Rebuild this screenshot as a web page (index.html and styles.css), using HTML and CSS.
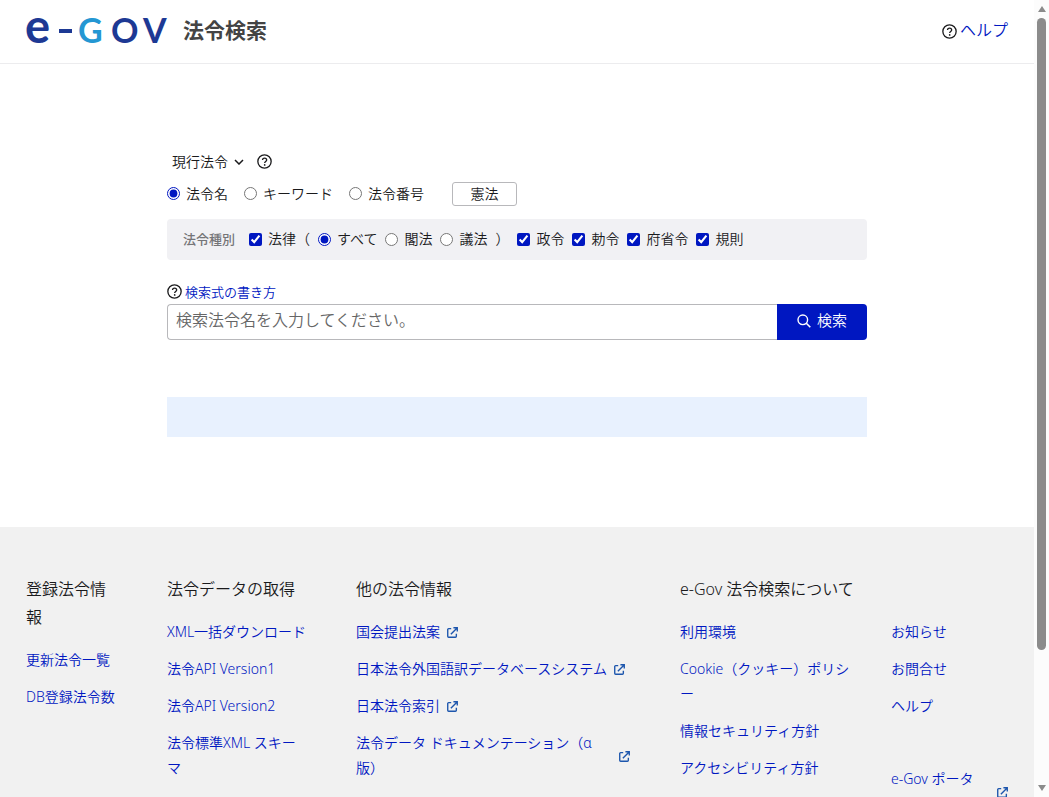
FILE: index.html
```html
<!DOCTYPE html>
<html lang="ja">
<head>
    <meta charset="UTF-8">
    <meta name="viewport" content="width=device-width, initial-scale=1.0">
    <title>e-Gov 法令検索</title>
    <link rel="stylesheet" href="styles.css">
</head>
<body>
    <!-- Shared icons -->
    <svg class="sprite" aria-hidden="true">
        <symbol id="icon-help" viewBox="0 0 16 16">
            <circle cx="8" cy="8" r="7.1" fill="none" stroke="currentColor" stroke-width="1.4"/>
            <path d="M5.9 6.5c0-1.3.9-2.2 2.2-2.2s2.2.8 2.2 2c0 1.7-2.1 1.8-2.1 3.4" fill="none" stroke="currentColor" stroke-width="1.4"/>
            <circle cx="8.2" cy="11.6" r=".9" fill="currentColor"/>
        </symbol>
        <symbol id="icon-external" viewBox="0 0 12 12">
            <path d="M4.6 1.8H1.8a1 1 0 0 0-1 1v7.4a1 1 0 0 0 1 1h7.4a1 1 0 0 0 1-1V7.4M7 .8h4.2V5M11 1 4.2 7.8" fill="none" stroke="currentColor" stroke-width="1.5"/>
        </symbol>
    </svg>

    <div class="page">
        <header class="header">
            <a class="brand" href="#">
                <svg class="logo" viewBox="0 0 144 52" role="img" aria-label="e-Gov">
                    <text y="39"><tspan class="logo-e" x="-1">e</tspan><tspan class="logo-g" x="52">G</tspan><tspan x="85">O</tspan><tspan x="117">V</tspan></text>
                    <rect x="33" y="25" width="13" height="4"/>
                </svg>
                <span class="brand-name">法令検索</span>
            </a>
            <a class="help-link" href="#"><svg class="icon-help"><use href="#icon-help"/></svg>ヘルプ</a>
        </header>

        <main class="search">
            <div class="row">
                <div class="law-select">
                    <select aria-label="法令の範囲">
                        <option>現行法令</option>
                    </select>
                    <svg class="chevron" viewBox="0 0 10 6"><path d="M1 1l4 4 4-4" fill="none" stroke="currentColor" stroke-width="1.5"/></svg>
                </div>
                <svg class="icon-help"><use href="#icon-help"/></svg>
            </div>

            <div class="row targets">
                <label><input type="radio" name="target" checked>法令名</label>
                <label><input type="radio" name="target">キーワード</label>
                <label><input type="radio" name="target">法令番号</label>
                <button class="constitution" type="button">憲法</button>
            </div>

            <div class="types">
                <span class="types-title">法令種別</span>
                <div class="types-group">
                    <label><input type="checkbox" checked>法律</label>
                    <span>（</span>
                </div>
                <label><input type="radio" name="law" checked>すべて</label>
                <label><input type="radio" name="law">閣法</label>
                <label><input type="radio" name="law">議法</label>
                <span>）</span>
                <label><input type="checkbox" checked>政令</label>
                <label><input type="checkbox" checked>勅令</label>
                <label><input type="checkbox" checked>府省令</label>
                <label><input type="checkbox" checked>規則</label>
            </div>

            <a class="hint" href="#"><svg class="icon-help"><use href="#icon-help"/></svg>検索式の書き方</a>
            <form class="search-form">
                <input type="text" placeholder="検索法令名を入力してください。" aria-label="検索法令名">
                <button type="button">
                    <svg viewBox="0 0 14 14"><circle cx="5.8" cy="5.8" r="4.8" fill="none" stroke="currentColor" stroke-width="1.4"/><path d="M9.3 9.3l4 4" stroke="currentColor" stroke-width="1.6"/></svg>検索
                </button>
            </form>
            <div class="notice"></div>
        </main>

        <footer class="footer">
            <section class="narrow">
                <h2>登録法令情報</h2>
                <ul>
                    <li><a href="#">更新法令一覧</a></li>
                    <li><a href="#">DB登録法令数</a></li>
                </ul>
            </section>
            <section class="narrow">
                <h2>法令データの取得</h2>
                <ul>
                    <li><a href="#">XML一括ダウンロード</a></li>
                    <li><a href="#">法令API Version1</a></li>
                    <li><a href="#">法令API Version2</a></li>
                    <li><a href="#">法令標準XML スキーマ</a></li>
                </ul>
            </section>
            <section class="related">
                <h2>他の法令情報</h2>
                <ul>
                    <li><a class="external" href="#">国会提出法案<svg><use href="#icon-external"/></svg></a></li>
                    <li><a class="external" href="#">日本法令外国語訳データベースシステム<svg><use href="#icon-external"/></svg></a></li>
                    <li><a class="external" href="#">日本法令索引<svg><use href="#icon-external"/></svg></a></li>
                    <li><a class="external" href="#">法令データ ドキュメンテーション（α版）<svg><use href="#icon-external"/></svg></a></li>
                </ul>
            </section>
            <section>
                <h2>e-Gov 法令検索について</h2>
                <ul>
                    <li><a href="#">利用環境</a></li>
                    <li><a href="#">Cookie（クッキー）ポリシー</a></li>
                    <li><a href="#">情報セキュリティ方針</a></li>
                    <li><a href="#">アクセシビリティ方針</a></li>
                </ul>
            </section>
            <section class="untitled">
                <ul>
                    <li><a href="#">お知らせ</a></li>
                    <li><a href="#">お問合せ</a></li>
                    <li><a href="#">ヘルプ</a></li>
                </ul>
                <ul class="portal">
                    <li><a class="external" href="#">e-Gov ポータル<svg><use href="#icon-external"/></svg></a></li>
                </ul>
            </section>
        </footer>
    </div>

    <div class="scrollbar" aria-hidden="true">
        <svg viewBox="0 0 10 8"><path d="M5 1l4 6H1z"/></svg>
        <div class="scroll-track"><div class="scroll-thumb"></div></div>
        <svg viewBox="0 0 10 8"><path d="M5 7l4-6H1z"/></svg>
    </div>
</body>
</html>
```
FILE: styles.css
```css
* {
    box-sizing: border-box;
}
body {
    display: flex;
    height: 100vh;
    margin: 0;
    overflow: hidden;
    font-family: "Noto Sans", "Noto Sans CJK JP", sans-serif;
    font-size: 14px;
    font-weight: 350;
    line-height: 24px;
    color: #1a1a1c;
    background: #fff;
}
a {
    color: #0017c1;
    text-decoration: none;
}
button, input, select {
    font-family: inherit;
    font-weight: inherit;
    color: inherit;
}
ul {
    margin: 0;
    padding: 0;
    list-style: none;
}
.sprite {
    position: absolute;
    width: 0;
    height: 0;
}
.page {
    flex: 1;
    min-width: 0;
    overflow: hidden;
}
.icon-help {
    flex: none;
    width: 15px;
    height: 15px;
    color: #1a1a1c;
}

/* Header */
.header {
    display: flex;
    align-items: center;
    justify-content: space-between;
    height: 64px;
    padding: 0 26px 4px;
    border-bottom: 1px solid #ececee;
}
.brand {
    display: flex;
    align-items: center;
    gap: 13px;
}
.logo {
    width: 144px;
    height: 52px;
    overflow: visible;
    font-family: Lato, sans-serif;
    font-size: 34px;
    font-weight: 700;
    fill: #1d3994;
}
.logo-e {
    font-size: 47px;
}
.logo-g {
    fill: #2497d3;
}
.brand-name {
    font-size: 21px;
    font-weight: 700;
    color: #444;
}
.help-link {
    display: flex;
    align-items: center;
    gap: 3px;
    font-size: 16px;
}
.help-link svg {
    margin-top: 3px;
}

/* Search */
.search {
    max-width: 700px;
    margin: 0 auto;
    padding: 85px 0 90px;
}
.row {
    display: flex;
    align-items: center;
    gap: 9px;
    margin-bottom: 8px;
}
label {
    display: flex;
    align-items: center;
    gap: 6px;
}
input[type="radio"], input[type="checkbox"] {
    width: 13px;
    height: 13px;
    margin: 0;
    accent-color: #0017c1;
}
.law-select {
    position: relative;
}
.law-select select {
    height: 24px;
    padding: 0 20px 0 5px;
    border: 0;
    font-size: 14px;
    background: transparent;
    appearance: none;
}
.chevron {
    position: absolute;
    top: 10px;
    right: 4px;
    width: 10px;
    height: 6px;
    pointer-events: none;
}
.targets {
    gap: 16px;
    margin-bottom: 13px;
}
.constitution {
    width: 65px;
    height: 24px;
    margin-left: 12px;
    padding: 0;
    border: 1px solid #b8b8bb;
    border-radius: 3px;
    font-size: 14px;
    line-height: 20px;
    background: #fff;
}
.types {
    display: flex;
    align-items: center;
    gap: 8px;
    height: 41px;
    margin-bottom: 20px;
    padding: 0 16px;
    border-radius: 4px;
    background: #f1f1f4;
}
.types-title {
    margin-right: 6px;
    font-size: 13px;
    font-weight: 500;
    color: #757578;
}
.types-group {
    display: flex;
}
.hint {
    display: flex;
    align-items: center;
    gap: 3px;
    font-size: 13px;
}
.search-form {
    display: flex;
    height: 36px;
}
.search-form input {
    flex: 1;
    min-width: 0;
    padding: 0 8px 4px;
    border: 1px solid #b8b8bb;
    border-right: 0;
    border-radius: 4px 0 0 4px;
    font-size: 16px;
}
.search-form input::placeholder {
    color: #666;
}
.search-form button {
    display: flex;
    align-items: center;
    justify-content: center;
    gap: 6px;
    width: 90px;
    padding: 0 6px 4px;
    border: 0;
    border-radius: 0 4px 4px 0;
    font-size: 15px;
    color: #fff;
    background: #0017c1;
}
.search-form svg {
    width: 14px;
    height: 14px;
    margin-top: 3px;
}
.notice {
    height: 40px;
    margin-top: 57px;
    background: #e8f1fe;
}

/* Footer */
.footer {
    display: grid;
    grid-template-columns: 105fr 153fr 288fr 175fr 117fr;
    column-gap: 36px;
    min-height: 100%;
    padding: 48px 26px;
    line-height: 25px;
    background: #f1f1f1;
}
.footer h2 {
    margin: 0 0 16px;
    font-size: 16px;
    font-weight: inherit;
    line-height: 28px;
}
.footer li {
    margin-bottom: 12px;
}
.narrow {
    padding-right: 12px;
}
.related {
    padding-right: 14px;
}
.external {
    display: flex;
    align-items: center;
    gap: 7px;
}
.external svg {
    flex: none;
    width: 11px;
    height: 11px;
    margin-top: 3px;
    color: #1d56ad;
}
.untitled {
    padding-top: 44px;
}
.portal {
    padding-top: 36px;
}
.portal .external {
    gap: 14px;
}

/* Scrollbar */
.scrollbar {
    display: flex;
    flex-direction: column;
    align-items: center;
    gap: 5px;
    width: 15px;
    padding: 5px 0;
    background: #fcfcfc;
}
.scrollbar svg {
    width: 10px;
    height: 8px;
    fill: #8b8b8b;
}
.scroll-track {
    flex: 1;
}
.scroll-thumb {
    width: 9px;
    height: 83%;
    border-radius: 5px;
    background: #8b8b8b;
}
```
